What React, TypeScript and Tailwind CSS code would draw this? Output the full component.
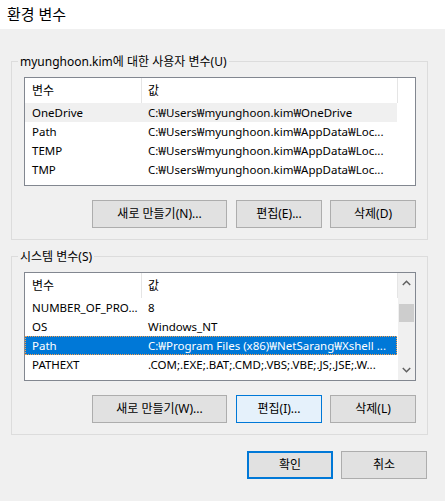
const font = "font-['Noto_Sans','Noto_Sans_CJK_KR',sans-serif]";

type RowData = { name: string; value: string; state?: "hover" | "selected" };

const userVars: RowData[] = [
  { name: "OneDrive", value: "C:₩Users₩myunghoon.kim₩OneDrive", state: "hover" },
  { name: "Path", value: "C:₩Users₩myunghoon.kim₩AppData₩Loc..." },
  { name: "TEMP", value: "C:₩Users₩myunghoon.kim₩AppData₩Loc..." },
  { name: "TMP", value: "C:₩Users₩myunghoon.kim₩AppData₩Loc..." },
];

const sysVars: RowData[] = [
  { name: "NUMBER_OF_PRO...", value: "8" },
  { name: "OS", value: "Windows_NT" },
  { name: "Path", value: "C:₩Program Files (x86)₩NetSarang₩Xshell ...", state: "selected" },
  { name: "PATHEXT", value: ".COM;.EXE;.BAT;.CMD;.VBS;.VBE;.JS;.JSE;.W..." },
];

function Row({ row }: { row: RowData }) {
  const look =
    row.state === "selected"
      ? "bg-[#0078d7] text-white outline outline-1 outline-dotted outline-[#f7a04d] -outline-offset-1"
      : row.state === "hover"
        ? "bg-[#f0f0f0] text-black"
        : "text-black";
  return (
    <div className={`flex h-[19px] w-[372px] items-center text-[11.5px] leading-[19px] ${look}`}>
      <div className="w-[117px] overflow-hidden whitespace-nowrap pl-[7px]">{row.name}</div>
      <div className="flex-1 overflow-hidden whitespace-nowrap pl-[6px]">{row.value}</div>
    </div>
  );
}

function Table({ rows }: { rows: RowData[] }) {
  return (
    <div className="w-[373px] shrink-0">
      <div className="flex h-[25px] items-center">
        <div className="h-full w-[117px] border-r border-[#e5e5e5] pl-[7px] leading-[25px]">변수</div>
        <div className="h-full w-[256px] border-r border-[#e5e5e5] pl-[6px] leading-[25px]">값</div>
      </div>
      {rows.map((r) => (
        <Row key={r.name + r.value} row={r} />
      ))}
    </div>
  );
}

function Chevron({ up }: { up?: boolean }) {
  return (
    <svg width="9" height="6" viewBox="0 0 9 6">
      <polyline
        points={up ? "0.8,5 4.5,1.3 8.2,5" : "0.8,1 4.5,4.7 8.2,1"}
        fill="none"
        stroke="#606060"
        strokeWidth="1.5"
      />
    </svg>
  );
}

function Btn({ label, kind, wide }: { label: string; kind?: "focus" | "default"; wide?: boolean }) {
  const look =
    kind === "focus"
      ? "border border-[#0078d7] bg-[#e5f1fb]"
      : kind === "default"
        ? "border-2 border-[#0078d7] bg-[#e1e1e1]"
        : "border border-[#adadad] bg-[#e1e1e1]";
  return (
    <div
      className={`flex h-[28px] items-center justify-center text-[12px] text-black ${wide ? "w-[135px]" : "w-[86px]"} ${look}`}
    >
      {label}
    </div>
  );
}

function Group({ title, children }: { title: string; children: React.ReactNode }) {
  return (
    <div className="ml-[11px] w-[417px] border border-[#dcdcdc] pb-[11px] pl-[12px] pr-[11px]">
      <div className="-ml-[6px] -mt-[8px] h-[16px] w-fit bg-[#f0f0f0] px-[2px] leading-[16px]">{title}</div>
      {children}
    </div>
  );
}

export default function App() {
  return (
    <div className={`h-[501px] w-[445px] overflow-hidden bg-[#f0f0f0] text-[12px] text-black ${font}`}>
      <div className="flex h-[29px] items-center bg-white pl-[7px] text-[15px]">환경 변수</div>

      <div className="mt-[32px]">
        <Group title="myunghoon.kim에 대한 사용자 변수(U)">
          <div className="mt-[7px] h-[109px] w-[392px] overflow-hidden border border-[#828790] bg-white">
            <Table rows={userVars} />
          </div>
          <div className="mt-[14px] flex justify-end">
            <Btn label="새로 만들기(N)..." wide />
            <div className="ml-[9px]">
              <Btn label="편집(E)..." />
            </div>
            <div className="ml-[8px]">
              <Btn label="삭제(D)" />
            </div>
          </div>
        </Group>
      </div>

      <div className="mt-[16px]">
        <Group title="시스템 변수(S)">
          <div className="mt-[7px] flex h-[109px] w-[392px] overflow-hidden border border-[#828790] bg-white">
            <Table rows={sysVars} />
            <div className="flex w-[17px] flex-col items-center bg-[#f0f0f0]">
              <div className="flex h-[20px] items-center justify-center">
                <Chevron up />
              </div>
              <div className="mt-[11px] h-[18px] w-[15px] bg-[#cdcdcd]" />
              <div className="flex-1" />
              <div className="flex h-[20px] items-center justify-center">
                <Chevron />
              </div>
            </div>
          </div>
          <div className="mt-[14px] flex justify-end">
            <Btn label="새로 만들기(W)..." wide />
            <div className="ml-[9px]">
              <Btn label="편집(I)..." kind="focus" />
            </div>
            <div className="ml-[8px]">
              <Btn label="삭제(L)" />
            </div>
          </div>
        </Group>
      </div>

      <div className="mt-[16px] flex justify-end gap-[8px] pr-[18px]">
        <Btn label="확인" kind="default" />
        <Btn label="취소" />
      </div>
    </div>
  );
}
